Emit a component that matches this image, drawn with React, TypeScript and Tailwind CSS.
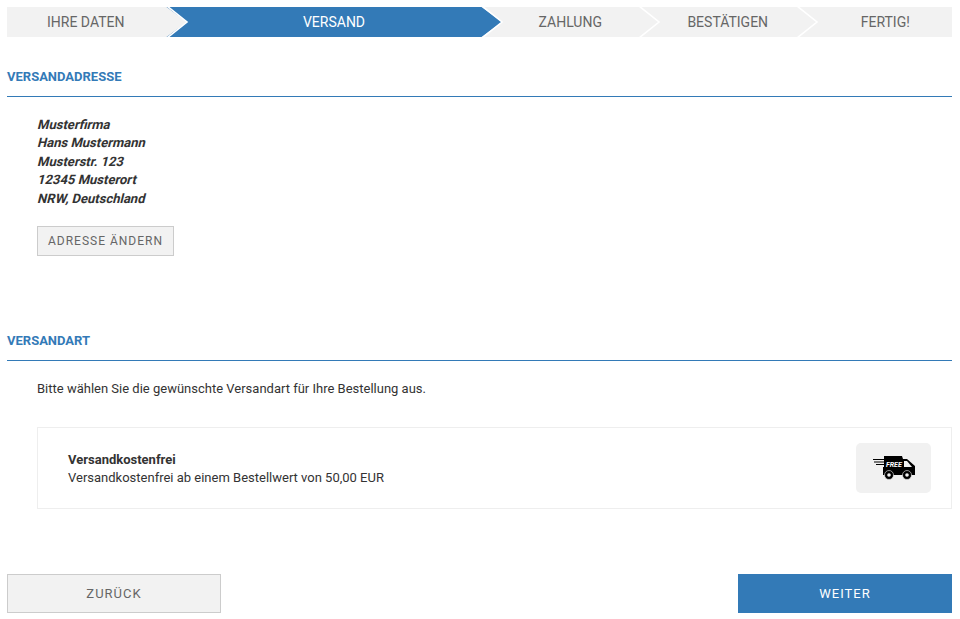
const steps = [
  { label: 'Ihre Daten', first: true },
  { label: 'Versand', active: true },
  { label: 'Zahlung' },
  { label: 'Bestätigen' },
  { label: 'Fertig!', last: true },
]

const address = ['Musterfirma', 'Hans Mustermann', 'Musterstr. 123', '12345 Musterort', 'NRW, Deutschland']

function Chevron({ fill }: { fill: string }) {
  return (
    <svg className="absolute left-full top-0 z-10" width="24" height="30" viewBox="0 0 24 30">
      <path d="M0 0H1.5L22 15L1.5 30H0Z" fill={fill} />
      <path d="M2 -1L22 15L2 31" fill="none" stroke="#fff" strokeWidth="1.6" />
    </svg>
  )
}

function Stepper() {
  return (
    <div className="grid grid-cols-6 h-[30px] bg-[#f2f2f2]">
      {steps.map((s) => (
        <div
          key={s.label}
          className={`relative flex items-center justify-center text-[14px] uppercase ${s.active ? 'col-span-2 bg-[#337ab7] text-white pl-6' : 'text-[#666]'} ${!s.active && !s.first ? 'pl-6' : ''}`}
        >
          {s.label}
          {!s.last && <Chevron fill={s.active ? '#337ab7' : '#f2f2f2'} />}
        </div>
      ))}
    </div>
  )
}

function SectionHeading({ children }: { children: string }) {
  return (
    <h2 className="border-b border-b-[#337ab7] pb-[10px] text-[13px] leading-[19px] font-bold uppercase text-[#337ab7]">
      {children}
    </h2>
  )
}

function FreeTruck() {
  return (
    <svg className="ml-0.5" width="44" height="26" viewBox="0 0 44 26">
      <path d="M7 1H29L30 4H34L42 11V20H10V12H11V1Z" fill="#000" />
      <path d="M0 4.5H12M1 7H12M3 9.5H12" stroke="#000" strokeWidth="1.2" />
      <path d="M31 6H34L39 12H31Z" fill="#f1f1f1" />
      <circle cx="16" cy="20" r="4.5" fill="#000" stroke="#f1f1f1" strokeWidth="0.6" />
      <circle cx="16" cy="20" r="1.8" fill="#f1f1f1" />
      <circle cx="34" cy="20" r="4.5" fill="#000" stroke="#f1f1f1" strokeWidth="0.6" />
      <circle cx="34" cy="20" r="1.8" fill="#f1f1f1" />
      <text x="13" y="12" fontSize="7" fontWeight="700" fontStyle="italic" fill="#fff" fontFamily="Roboto, sans-serif">FREE</text>
    </svg>
  )
}

export default function App() {
  return (
    <div className="h-[619px] overflow-hidden bg-white pl-[7px] pr-[8px] pt-[7px] font-['Roboto',sans-serif] text-[13px] leading-[18.57px] text-[#333]">
      <Stepper />

      <section className="mt-[30px]">
        <SectionHeading>Versandadresse</SectionHeading>
        <div className="pl-[30px] pt-[18.5px]">
          <div className="h-[92.5px] font-bold">
            {address.map((line) => (
              <div key={line} className="origin-[0_13.5px] skew-x-[-14deg]">
                {line}
              </div>
            ))}
          </div>
          <button className="mt-[18px] block h-[30px] w-[137px] border border-[#ccc] bg-[#f2f2f2] text-[12px] uppercase tracking-[1px] text-[#666]">
            Adresse ändern
          </button>
        </div>
      </section>

      <section className="mt-[75px]">
        <SectionHeading>Versandart</SectionHeading>
        <div className="pl-[30px]">
          <p className="mt-[18px] leading-[19px]">Bitte wählen Sie die gewünschte Versandart für Ihre Bestellung aus.</p>
          <div className="mt-[29px] flex h-[82px] items-center justify-between border border-[#eee] pl-[30px] pr-5">
            <div className="pt-[2.6px]">
              <div className="font-bold">Versandkostenfrei</div>
              <div>Versandkostenfrei ab einem Bestellwert von 50,00 EUR</div>
            </div>
            <div className="flex h-[50px] w-[75px] items-center justify-center rounded-[5px] bg-[#f1f1f1]">
              <FreeTruck />
            </div>
          </div>
        </div>
      </section>

      <div className="mt-[65px] flex justify-between">
        <button className="h-[39px] w-[214px] border border-[#ccc] bg-[#f2f2f2] pt-px text-[13px] uppercase tracking-[1px] text-[#666]">
          Zurück
        </button>
        <button className="h-[39px] w-[214px] border border-[#337ab7] bg-[#337ab7] pt-px text-[13px] uppercase tracking-[1px] text-white">
          Weiter
        </button>
      </div>
    </div>
  )
}
